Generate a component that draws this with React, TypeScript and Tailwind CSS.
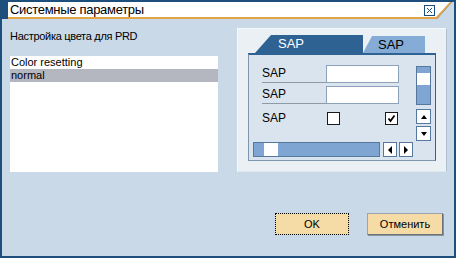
import React from "react";

function Tri({ dir }: { dir: "up" | "down" | "left" | "right" }) {
  const pts: Record<string, string> = {
    up: "1,6 7,6 4,2",
    down: "1,2 7,2 4,6",
    left: "6,0 6,8 2,4",
    right: "2,0 2,8 6,4",
  };
  return (
    <svg width="8" height="8" viewBox="0 0 8 8">
      <polygon points={pts[dir]} fill="#000" />
    </svg>
  );
}

function SmallBtn({ dir, w }: { dir: "up" | "down" | "left" | "right"; w: number }) {
  return (
    <div
      className={`${w === 15 ? "w-[15px]" : "w-[14px]"} h-[15px] bg-white border border-[#55789c] flex items-center justify-center`}
    >
      <Tri dir={dir} />
    </div>
  );
}

export default function App() {
  return (
    <div className="w-[456px] h-[258px] bg-[#1d4f7c] flex flex-col font-['Liberation_Sans',Arial,sans-serif] text-black overflow-hidden">
      {/* Title bar */}
      <div className="relative h-[19px] shrink-0">
        <svg className="absolute inset-0" width="456" height="19" viewBox="0 0 456 19">
          <rect x="0" y="0" width="456" height="19" fill="#1d4f7c" />
          <polygon points="437,19 452,2 454,2 454,19" fill="#c9d9e7" />
          <polygon points="8,2 452,2 437,19 8,19" fill="#e2a444" />
          <polygon points="8,2 450,2 436,17 8,17" fill="#ffffff" />
        </svg>
        <div className="relative flex items-center h-[17px] pt-[2px] pl-[10px]">
          <span className="text-[13px] leading-[15px] tracking-[-0.3px]">Системные параметры</span>
          <div className="ml-auto mr-[21px] w-[11px] h-[11px] mt-[1px] bg-white border border-[#1d4f7c] flex items-center justify-center">
            <svg width="9" height="9" viewBox="0 0 9 9">
              <path d="M2 2 L7 7 M7 2 L2 7" stroke="#1d4f7c" strokeWidth="1" />
            </svg>
          </div>
        </div>
      </div>

      {/* Body */}
      <div className="flex-1 mx-[2px] mb-[2px] bg-[#c9d9e7] flex flex-col">
        <div className="flex">
          {/* Left column */}
          <div className="pl-[8px] pt-[10px] flex flex-col">
            <div className="text-[11px] leading-[14px] h-[14px] tracking-[-0.3px]">Настройка цвета для PRD</div>
            <div className="mt-[13px] w-[208px] h-[116px] bg-white text-[11px] leading-[13px]">
              <div className="h-[13px] pl-[1px]">Color resetting</div>
              <div className="h-[13px] pl-[1px] bg-[#b4b6c0]">normal</div>
            </div>
          </div>

          {/* Right panel */}
          <div className="ml-[19px] mt-[9px] w-[210px] h-[144px] bg-[#ebf0f5] border-t border-l border-[#f6f8fb] border-r border-b border-r-[#aebfd0] border-b-[#dfe7ef] pt-[6px] pl-[10px]">
            {/* Tabs */}
            <div className="flex items-end h-[18px] pl-[7px]">
              <div className="w-[108px] h-[18px] bg-[#2e6293] [clip-path:polygon(16px_0,100%_0,100%_100%,0_100%)] text-white text-[13px] leading-[18px] pl-[23px]">
                SAP
              </div>
              <div className="w-[62px] h-[17px] bg-[#85acd6] [clip-path:polygon(9px_0,100%_0,100%_100%,0_100%)] text-[13px] leading-[17px] pl-[15px]">
                SAP
              </div>
            </div>
            {/* Tab content */}
            <div className="w-[188px] h-[108px] bg-[#d9e4ef] border-t-2 border-t-[#2e6293] border-l border-r border-b border-l-[#7f95ab] border-r-[#3f5f80] border-b-[#7f95ab] flex">
              <div className="w-[167px] flex flex-col">
                <div className="pl-[13px] pt-[10px] flex flex-col text-[12px]">
                  <div className="flex h-[18px]">
                    <div className="w-[64px] border-b border-[#8e9aa6] leading-[17px]">SAP</div>
                    <div className="w-[73px] h-[18px] bg-white border border-[#8ca2b8]" />
                  </div>
                  <div className="flex h-[18px] mt-[3px]">
                    <div className="w-[64px] border-b border-[#8e9aa6] leading-[17px]">SAP</div>
                    <div className="w-[73px] h-[18px] bg-white border border-[#8ca2b8]" />
                  </div>
                  <div className="flex h-[13px] mt-[8px] items-center">
                    <div className="w-[65px] leading-[13px]">SAP</div>
                    <div className="w-[13px] h-[13px] bg-white border border-[#1a1a1a]" />
                    <div className="ml-[45px] w-[13px] h-[13px] bg-white border border-[#1a1a1a] flex items-center justify-center">
                      <svg width="11" height="11" viewBox="0 0 11 11">
                        <path d="M2.5 5.5 L4.5 8 L8.5 2.5" stroke="#000" strokeWidth="1.8" fill="none" />
                      </svg>
                    </div>
                  </div>
                </div>
                <div className="flex items-center mt-[17px] pl-[4px]">
                  <div className="w-[127px] h-[15px] bg-[#7fa6d2] border border-[#55789c] pl-[10px]">
                    <div className="w-[14px] h-full bg-white" />
                  </div>
                  <div className="ml-[3px]">
                    <SmallBtn dir="left" w={14} />
                  </div>
                  <div className="ml-[2px]">
                    <SmallBtn dir="right" w={14} />
                  </div>
                </div>
              </div>
              <div className="flex flex-col pt-[11px]">
                <div className="w-[15px] h-[39px] bg-[#7fa6d2] border border-[#55789c] pt-[6px]">
                  <div className="w-full h-[12px] bg-white" />
                </div>
                <div className="mt-[4px]">
                  <SmallBtn dir="up" w={15} />
                </div>
                <div className="mt-[2px]">
                  <SmallBtn dir="down" w={15} />
                </div>
              </div>
            </div>
          </div>
        </div>

        {/* Buttons */}
        <div className="mt-auto flex justify-end pr-[11px] pb-[21px] gap-[18px] text-[11px]">
          <div className="w-[74px] h-[22px] bg-[#f5dca6] border border-dotted border-black flex items-center justify-center">
            OK
          </div>
          <div className="w-[76px] h-[22px] bg-[#f5dca6] border border-[#9aa4ae] border-r-[#6a737c] border-b-[#6a737c] shadow-[1px_1px_0_#8a939c] flex items-center justify-center">
            Отменить
          </div>
        </div>
      </div>
    </div>
  );
}
